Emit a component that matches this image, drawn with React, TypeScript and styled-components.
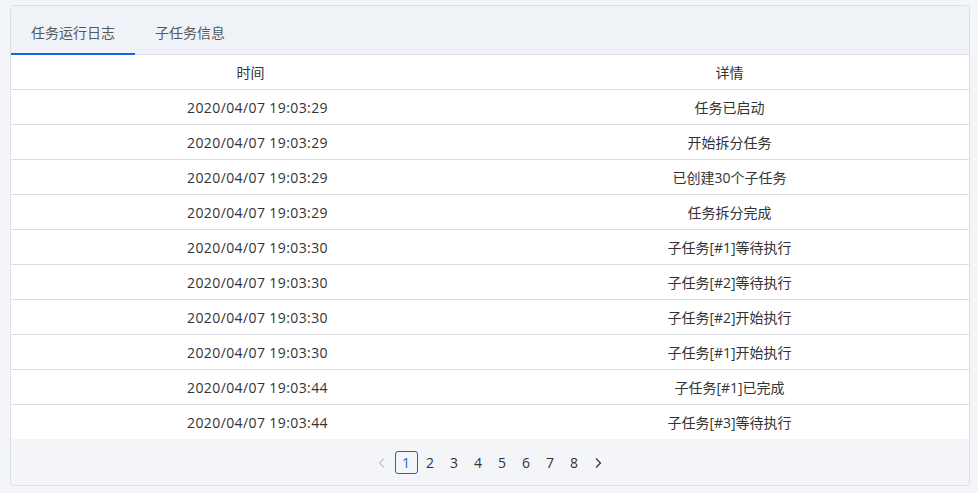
import { FC, useState } from "react"
import styled, { createGlobalStyle } from "styled-components"

const GlobalStyle = createGlobalStyle`
  html, body {
    margin: 0;
    padding: 0;
    background: #f4f5f8;
    font-family: "Open Sans", "Noto Sans CJK SC", sans-serif;
    color: #333;
  }
`

const Page = styled.div`
  padding: 5px 8px 7px 10px;
`

const Card = styled.div`
  background: #f4f5f9;
  border: 1px solid #dcdfe6;
  border-radius: 4px;
  overflow: hidden;
`

const TabBar = styled.div`
  display: flex;
  height: 48px;
  background: #eff2f7;
  border-bottom: 1px solid #dcdfe6;
`

const Tab = styled.div<{ $active?: boolean }>`
  display: flex;
  align-items: center;
  justify-content: center;
  padding: 4px 20px 0;
  margin-bottom: -1px;
  font-size: 14px;
  color: #555a62;
  border-bottom: 2px solid ${p => (p.$active ? "#1364e0" : "transparent")};
  cursor: pointer;
`

const Table = styled.table`
  width: 100%;
  border-collapse: collapse;
  table-layout: fixed;
  background: #fff;
  font-size: 14px;
`

const Th = styled.th`
  height: 34px;
  padding: 0;
  font-weight: normal;
  color: #333;
  border-bottom: 1px solid #dcdfe6;
  text-align: center;
`

const Td = styled.td<{ $last?: boolean; $time?: boolean }>`
  height: 34px;
  padding: 0 0 0 ${p => (p.$time ? "14px" : "0")};
  text-align: center;
  color: #333;
  letter-spacing: ${p => (p.$time ? "0.4px" : "0")};
  border-bottom: ${p => (p.$last ? "none" : "1px solid #dcdfe6")};
`

const Pager = styled.div`
  display: flex;
  justify-content: center;
  align-items: center;
  gap: 1px;
  height: 45px;
  padding-top: 1px;
`

const PageBtn = styled.button<{ $active?: boolean }>`
  width: 23px;
  height: 23px;
  padding: 0;
  display: flex;
  align-items: center;
  justify-content: center;
  font-family: inherit;
  font-size: 14px;
  color: ${p => (p.$active ? "#1364e0" : "#333")};
  background: transparent;
  border: 1px solid ${p => (p.$active ? "#1364e0" : "transparent")};
  border-radius: 3px;
  cursor: pointer;
`

const Arrow = styled.span<{ $disabled?: boolean }>`
  width: 23px;
  height: 23px;
  display: flex;
  align-items: center;
  justify-content: center;
  color: ${p => (p.$disabled ? "#c0c4cc" : "#333")};
`

const logs = [
  ["2020/04/07 19:03:29", "任务已启动"],
  ["2020/04/07 19:03:29", "开始拆分任务"],
  ["2020/04/07 19:03:29", "已创建30个子任务"],
  ["2020/04/07 19:03:29", "任务拆分完成"],
  ["2020/04/07 19:03:30", "子任务[#1]等待执行"],
  ["2020/04/07 19:03:30", "子任务[#2]等待执行"],
  ["2020/04/07 19:03:30", "子任务[#2]开始执行"],
  ["2020/04/07 19:03:30", "子任务[#1]开始执行"],
  ["2020/04/07 19:03:44", "子任务[#1]已完成"],
  ["2020/04/07 19:03:44", "子任务[#3]等待执行"],
]

const Chevron: FC<{ dir: "left" | "right" }> = ({ dir }) => (
  <svg width="12" height="12" viewBox="0 0 12 12" fill="none" stroke="currentColor" strokeWidth="1.2">
    {dir === "left" ? <path d="M8 1.5 3.5 6 8 10.5" /> : <path d="M4 1.5 8.5 6 4 10.5" />}
  </svg>
)

const App: FC = () => {
  const [tab, setTab] = useState(0)
  const [page, setPage] = useState(1)

  return (
    <>
      <GlobalStyle />
      <Page>
        <Card>
          <TabBar>
            <Tab $active={tab === 0} onClick={() => setTab(0)}>任务运行日志</Tab>
            <Tab $active={tab === 1} onClick={() => setTab(1)}>子任务信息</Tab>
          </TabBar>
          <Table>
            <thead>
              <tr>
                <Th>时间</Th>
                <Th>详情</Th>
              </tr>
            </thead>
            <tbody>
              {logs.map(([time, detail], i) => (
                <tr key={i}>
                  <Td $time $last={i === logs.length - 1}>{time}</Td>
                  <Td $last={i === logs.length - 1}>{detail}</Td>
                </tr>
              ))}
            </tbody>
          </Table>
          <Pager>
            <Arrow $disabled><Chevron dir="left" /></Arrow>
            {[1, 2, 3, 4, 5, 6, 7, 8].map(n => (
              <PageBtn key={n} $active={page === n} onClick={() => setPage(n)}>{n}</PageBtn>
            ))}
            <Arrow><Chevron dir="right" /></Arrow>
          </Pager>
        </Card>
      </Page>
    </>
  )
}

export default App
